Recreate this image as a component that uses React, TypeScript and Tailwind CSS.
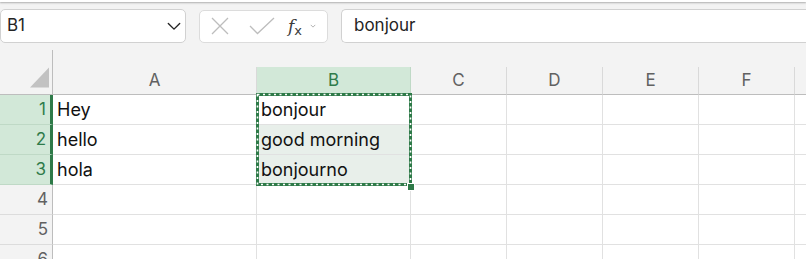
import React from "react";

const COLS = ["A", "B", "C", "D", "E", "F", ""];
const WIDTHS = [204, 154, 96, 96, 96, 96, 96];

const DATA: Record<number, string[]> = {
  1: ["Hey", "bonjour"],
  2: ["hello", "good morning"],
  3: ["hola", "bonjourno"],
};

function Chevron({ className }: { className?: string }) {
  return (
    <svg viewBox="0 0 16 10" className={className} fill="none">
      <path d="M1.5 1.5 8 8l6.5-6.5" stroke="currentColor" strokeWidth="1.6" strokeLinecap="round" strokeLinejoin="round" />
    </svg>
  );
}

function Toolbar() {
  return (
    <div className="flex items-center h-[34px] mt-[7px]">
      <div className="flex items-center w-[186px] h-[34px] shrink-0 bg-white border border-[#d1d1d1] rounded-[5px] pl-[6px] pr-[4px]">
        <span className="flex-1 text-[17px] text-[#242424]">B1</span>
        <Chevron className="w-[14px] h-[9px] text-[#242424]" />
      </div>
      <div className="ml-[13px] flex items-center w-[129px] h-[33px] shrink-0 bg-white border border-[#dcdcdc] rounded-[5px]">
        <svg viewBox="0 0 20 20" className="ml-[10px] w-[20px] h-[20px]" fill="none">
          <path d="M2 2l16 16M18 2 2 18" stroke="#bdbdbd" strokeWidth="1.3" />
        </svg>
        <svg viewBox="0 0 26 18" className="ml-[19px] w-[26px] h-[18px]" fill="none">
          <path d="M1 9l7.5 7.5L25 1" stroke="#bdbdbd" strokeWidth="1.3" />
        </svg>
        <span className="ml-[13px] text-[17px] italic text-[#3a3a3a] [font-family:'DejaVu_Serif',serif] leading-none">
          f<span className="text-[13px] not-italic [font-family:'DejaVu_Sans',sans-serif] relative top-[3px]">x</span>
        </span>
        <svg viewBox="0 0 8 5" className="ml-[8px] w-[6px] h-[4px]" fill="none">
          <path d="M1 1l3 3 3-3" stroke="#9a9a9a" strokeWidth="1" />
        </svg>
      </div>
      <div className="ml-[13px] flex items-center flex-1 h-[34px] bg-white border border-[#d1d1d1] border-r-0 rounded-l-[5px] pl-[12px]">
        <span className="text-[17px] text-[#242424]">bonjour</span>
      </div>
    </div>
  );
}

function Grid() {
  const rows = [1, 2, 3, 4, 5, 6];
  return (
    <div className="relative mt-[7px]">
      {/* header */}
      <div className="flex h-[45px]">
        <div className="relative w-[53px] shrink-0 border-r border-[#bdbdbd] border-b">
          <svg viewBox="0 0 20 21" className="absolute left-[30px] top-[17px] w-[19px] h-[21px]">
            <path d="M20 0V21H0Z" fill="#c2c2c2" />
          </svg>
        </div>
        {COLS.map((c, i) => {
          const sel = c === "B";
          return (
            <div key={i} className="flex flex-col shrink-0" style={{ width: WIDTHS[i] }}>
              <div className="h-[17px]" />
              <div
                className={`flex-1 flex items-center justify-center border-r border-b text-[17px] ${
                  sel
                    ? "bg-[#d2e8d8] text-[#2f7b4a] border-r-[#bfd9c6] border-b-[#2e7a48]"
                    : "text-[#616161] border-r-[#d9d9d9] border-b-[#bdbdbd]"
                }`}
              >
                {c}
              </div>
            </div>
          );
        })}
      </div>
      {rows.map((r) => {
        const sel = r <= 3;
        return (
          <div key={r} className="flex h-[30px]">
            <div
              className={`w-[53px] shrink-0 flex items-center justify-end pr-[4px] border-b text-[17px] ${
                sel
                  ? "bg-[#d2e8d8] text-[#2f7b4a] border-r-[3px] border-r-[#2e7a48] border-b-[#bfd9c6]"
                  : "text-[#616161] border-r border-r-[#bdbdbd] border-b-[#dcdcdc]"
              }`}
            >
              {r}
            </div>
            {COLS.map((c, i) => {
              const fill = c === "B" && (r === 2 || r === 3);
              return (
                <div
                  key={i}
                  className={`shrink-0 flex items-center pl-[4px] border-r border-b border-[#e1e1e1] text-[18px] text-[#111] ${
                    fill ? "bg-[#e8efea]" : "bg-white"
                  }`}
                  style={{ width: WIDTHS[i] }}
                >
                  {DATA[r]?.[i] ?? ""}
                </div>
              );
            })}
          </div>
        );
      })}
      {/* copy marquee around B1:B3 */}
      <svg className="absolute left-[256px] top-[43px] w-[156px] h-[93px]" viewBox="0 0 156 93" fill="none">
        <rect x="1.5" y="1.5" width="153" height="90" stroke="#2e7a48" strokeWidth="3" />
        <rect x="1.5" y="1.5" width="153" height="90" stroke="#ffffff" strokeWidth="1.6" strokeDasharray="2 3.5" />
      </svg>
      <div className="absolute left-[407px] top-[133px] w-[6px] h-[6px] bg-[#2e7a48] border border-white box-content" />
    </div>
  );
}

export default function App() {
  return (
    <div className="w-[806px] h-[259px] overflow-hidden bg-[#f3f3f3] [font-family:Inter,'Liberation_Sans',sans-serif]">
      <div className="h-[2px] bg-white shadow-[0_1px_2px_rgba(0,0,0,0.3)]" />
      <Toolbar />
      <Grid />
    </div>
  );
}
